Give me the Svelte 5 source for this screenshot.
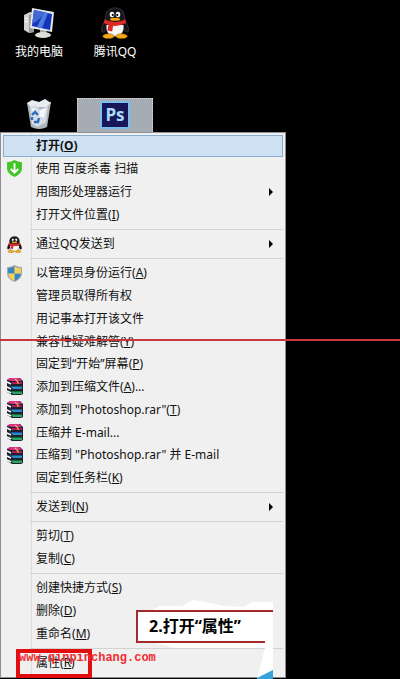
<script lang="ts">
	type Item = {
		label: string;
		key?: string;
		tail?: string;
		icon?: 'shield' | 'qq' | 'uac' | 'rar';
		submenu?: boolean;
		primary?: boolean;
	};

	const groups: Item[][] = [
		[
			{ label: '打开', key: 'O', primary: true },
			{ label: '使用 百度杀毒 扫描', icon: 'shield' },
			{ label: '用图形处理器运行', submenu: true },
			{ label: '打开文件位置', key: 'I' }
		],
		[{ label: '通过QQ发送到', icon: 'qq', submenu: true }],
		[
			{ label: '以管理员身份运行', key: 'A', icon: 'uac' },
			{ label: '管理员取得所有权' },
			{ label: '用记事本打开该文件' },
			{ label: '兼容性疑难解答', key: 'Y' },
			{ label: '固定到“开始”屏幕', key: 'P' },
			{ label: '添加到压缩文件', key: 'A', tail: '...', icon: 'rar' },
			{ label: '添加到 "Photoshop.rar"', key: 'T', icon: 'rar' },
			{ label: '压缩并 E-mail...', icon: 'rar' },
			{ label: '压缩到 "Photoshop.rar" 并 E-mail', icon: 'rar' },
			{ label: '固定到任务栏', key: 'K' }
		],
		[{ label: '发送到', key: 'N', submenu: true }],
		[
			{ label: '剪切', key: 'T' },
			{ label: '复制', key: 'C' }
		],
		[
			{ label: '创建快捷方式', key: 'S' },
			{ label: '删除', key: 'D' },
			{ label: '重命名', key: 'M' }
		],
		[{ label: '属性', key: 'R' }]
	];
</script>

{#snippet penguin()}
	<svg viewBox="0 0 32 34" aria-hidden="true">
		<path d="M16 1C9 1 6 5 6 11L6 14C3 18 1 22 2 26C3 28 6 25 7 24C8 29 12 31 16 31S24 29 25 24C26 25 29 28 30 26C31 22 29 18 26 14L26 11C26 5 23 1 16 1Z" fill="#15151a" stroke="#4a4a52" stroke-width=".7" />
		<path d="M7 19C6 27 11 31 16 31S26 27 25 19Z" fill="#f6f4f4" />
		<ellipse cx="9" cy="31" rx="6" ry="2.6" fill="#f0a818" stroke="#8a5200" stroke-width=".5" />
		<ellipse cx="23" cy="31" rx="6" ry="2.6" fill="#f0a818" stroke="#8a5200" stroke-width=".5" />
		<ellipse cx="12.8" cy="8" rx="2.4" ry="3" fill="#fff" />
		<ellipse cx="19.2" cy="8" rx="2.4" ry="3" fill="#fff" />
		<circle cx="13.6" cy="8.400" r="1.100" />
		<circle cx="18.4" cy="8.400" r="1.100" />
		<ellipse cx="16" cy="13" rx="5.500" ry="1.700" fill="#f7a500" />
		<path d="M5 13Q16 19 27 13L28 17Q20 21 14 20L13 26L8 25L9 19L4 17Z" fill="#dd2a26" />
	</svg>
{/snippet}

{#snippet books()}
	<svg viewBox="0 0 17 17" aria-hidden="true">
		<path d="M1 2L4 0H14L17 3V16L15 17H6L1 14Z" fill="#20202a" />
		<path d="M1 2L4 0H13L16 3H6Z" fill="#e0308c" />
		<path d="M6 4H16V6H6Z" fill="#b5145f" />
		<path d="M3 7L6 9H16V11H7Z" fill="#2a8fc4" />
		<path d="M6 8H16V9H6Z" fill="#1b4f9c" />
		<path d="M3 12L6 14H16V16H7Z" fill="#2da566" />
		<path d="M6 13H16V14H6Z" fill="#116a3c" />
		<path d="M1 4L5 6M1 9L5 11M1 13L5 15" stroke="#fff" stroke-width="1.5" />
		<path d="M9 1L12 4V6" fill="none" stroke="#e8b84a" stroke-width="1.2" />
	</svg>
{/snippet}

<main class="desktop">
	<div class="shortcuts">
		<button class="shortcut">
			<svg viewBox="0 0 32 32" aria-hidden="true">
				<path d="M1 8L7 5L11 6V25L6 26L1 23Z" fill="#d2d3ce" />
				<path d="M6 8L11 6V25L6 26Z" fill="#989c98" />
				<path d="M2 11L5 12M2 14L5 15" stroke="#fff" />
				<path d="M17 22H23L24 27H17Z" fill="#a9adab" />
				<ellipse cx="20" cy="28" rx="8" ry="3" fill="#dedfdb" />
				<path d="M9 1L31 5L29 25L7 21Z" fill="#e4e8ec" />
				<path d="M11 3L29 7L27 23L9 19Z" fill="#1434ba" />
				<path d="M11 3L21 5Q18 13 9 17Z" fill="#4468d4" />
				<path d="M21 5L25 6L19 21L14 20Z" fill="#4f7be0" />
			</svg>
			<span>我的电脑</span>
		</button>
		<button class="shortcut">
			{@render penguin()}
			<span>腾讯QQ</span>
		</button>
		<button class="shortcut" aria-label="回收站">
			<svg viewBox="0 0 32 32" aria-hidden="true">
				<path d="M4 5L28 4L24 29Q16 33 8 29Z" fill="#aeb6bd" />
				<path d="M4 5L9 2L16 4L22 1L28 5L23 9L8 9Z" fill="#e8edef" />
				<path d="M7 9L13 7L17 12L25 8L23 24L14 29L9 26Z" fill="#d4dce3" />
				<path d="M17 12L23 10L21 20L16 18ZM8 11L12 10L11 15Z" fill="#f5f7f8" />
				<path d="M9 17L12 14L15 17M16 20L15 24L11 24M9 22L9 19" fill="none" stroke="#2d6cc0" stroke-width="2.4" />
			</svg>
		</button>
		<button class="shortcut selected" aria-label="Photoshop">
			<svg viewBox="0 0 32 32" aria-hidden="true">
				<rect x="1" y="2" width="30" height="28" fill="#7cc0ea" />
				<rect x="3" y="4" width="26" height="24" fill="#17175a" />
				<text x="16" y="22" text-anchor="middle">Ps</text>
			</svg>
		</button>
	</div>

	<div class="menu" role="menu">
		{#each groups as group}
			<div class="group" role="group">
				{#each group as item}
					<button class="item" class:primary={item.primary} role="menuitem">
						<span class="icon">
							{#if item.icon === 'qq'}
								{@render penguin()}
							{:else if item.icon === 'rar'}
								{@render books()}
							{:else if item.icon === 'shield'}
								<svg viewBox="0 0 16 16" aria-hidden="true">
									<path d="M8 0Q11 2 15 2V8Q15 13 8 16Q1 13 1 8V2Q5 2 8 0Z" fill="#42c526" />
									<path d="M8 3V12M4.500 8.500L8 12L11.500 8.500" fill="none" stroke="#fff" stroke-width="1.8" />
								</svg>
							{:else if item.icon === 'uac'}
								<svg viewBox="0 0 16 16" aria-hidden="true">
									<path d="M8 0Q11 2 15 2V8Q15 13 8 16Q1 13 1 8V2Q5 2 8 0Z" fill="#9aa5ad" />
									<path d="M8 1.500V8H2V3Q5 3 8 1.500ZM8 8H14Q13 13 8 15Z" fill="#3585c6" />
									<path d="M8 1.500V8H14V3Q11 3 8 1.500ZM8 8H2Q3 13 8 15Z" fill="#f3d253" />
								</svg>
							{/if}
						</span>
						<span class="label">{item.label}{#if item.key}(<u>{item.key}</u>){/if}{item.tail ?? ''}</span>
						{#if item.submenu}
							<svg class="arrow" viewBox="0 0 4 8" aria-hidden="true"><path d="M0 0L4 4L0 8Z" /></svg>
						{/if}
					</button>
				{/each}
			</div>
		{/each}
	</div>

	<div class="callout">
		<svg viewBox="0 0 138 82" aria-hidden="true">
			<path d="M14 13L24 8L46 8L57 2L70 4L88 8L108 9L116 4L137 4V82H121L129 50L40 50L20 45Z" fill="#fff" />
			<path d="M137 13H1V44H129" fill="#fff" stroke="#a32a2b" stroke-width="2" />
			<path d="M137 14V82H121L131 43L133 14Z" fill="#fff" />
			<path d="M121 80L137 72V82H121Z" fill="#35a3d5" />
		</svg>
		<p>2.打开“属性”</p>
	</div>
	<div class="marker"></div>
	<p class="watermark">www.qinpinchang.com</p>
	<div class="rule"></div>
</main>

<style>
	:global(body) {
		margin: 0;
		background: #000;
	}
	.desktop {
		position: relative;
		min-height: 100vh;
		overflow: hidden;
		font-family: 'Noto Sans', 'Noto Sans CJK SC', sans-serif;
		font-size: 12px;
	}
	button {
		border: 0;
		padding: 0;
		background: none;
		font: inherit;
		color: inherit;
	}
	.shortcuts {
		display: grid;
		grid-template-columns: 76px 76px;
		grid-auto-rows: 76px;
		row-gap: 15px;
		padding: 7px 0 0 1px;
	}
	.shortcut {
		display: flex;
		flex-direction: column;
		align-items: center;
		gap: 3px;
		color: #fff;
		font-size: 12px;
		line-height: 20px;
	}
	.shortcut svg {
		width: 32px;
		height: 32px;
	}
	.shortcut.selected {
		border: 1px dotted #ddd;
		background: #a5acb3;
	}
	.shortcut text {
		fill: #a9ddfa;
		font: bold 17px 'Open Sans', sans-serif;
	}
	.menu {
		position: absolute;
		top: 132px;
		left: 0;
		box-sizing: border-box;
		width: 286px;
		padding: 2px 2px 3px;
		border: 1px solid #8f8f93;
		background: linear-gradient(#dcdcdc, #dcdcdc) 30px 0 / 1px 100% no-repeat #f0f0f0;
	}
	.group + .group {
		margin-top: 3px;
		padding-top: 3px;
		border-top: 1px solid;
		border-image: linear-gradient(90deg, transparent 28px, #d2d2d2 28px) 1;
	}
	.item {
		display: flex;
		align-items: center;
		box-sizing: border-box;
		width: 100%;
		height: 23px;
		line-height: 20px;
		color: #111;
		text-align: left;
	}
	.item:nth-child(4n + 1) {
		height: 22px;
	}
	.icon {
		display: flex;
		justify-content: center;
		width: 22px;
		margin-right: 11px;
	}
	.icon svg {
		width: 17px;
		height: 17px;
	}
	.label {
		flex: 1;
		white-space: pre;
	}
	.arrow {
		width: 4px;
		height: 8px;
		margin-right: 10px;
	}
	.primary {
		outline: 1px solid #8aaed0;
		outline-offset: -1px;
		background: #cfe2f4;
		font-weight: bold;
	}
	.callout {
		position: absolute;
		top: 598px;
		left: 136px;
		width: 138px;
	}
	.callout svg {
		display: block;
		width: 100%;
	}
	.callout p {
		position: absolute;
		top: 16px;
		left: 13px;
		margin: 0;
		font-size: 16px;
		font-weight: bold;
		line-height: 24px;
		white-space: nowrap;
	}
	.marker {
		position: absolute;
		top: 649px;
		left: 16px;
		box-sizing: border-box;
		width: 76px;
		height: 29px;
		border: 4px solid #e20d0f;
	}
	.watermark {
		position: absolute;
		top: 650px;
		left: 19px;
		margin: 0;
		color: #f22c30;
		font: bold 12px/16px 'Liberation Mono', monospace;
	}
	.rule {
		position: absolute;
		top: 339px;
		left: 0;
		right: 0;
		height: 2px;
		background: #c5393c;
	}
</style>
